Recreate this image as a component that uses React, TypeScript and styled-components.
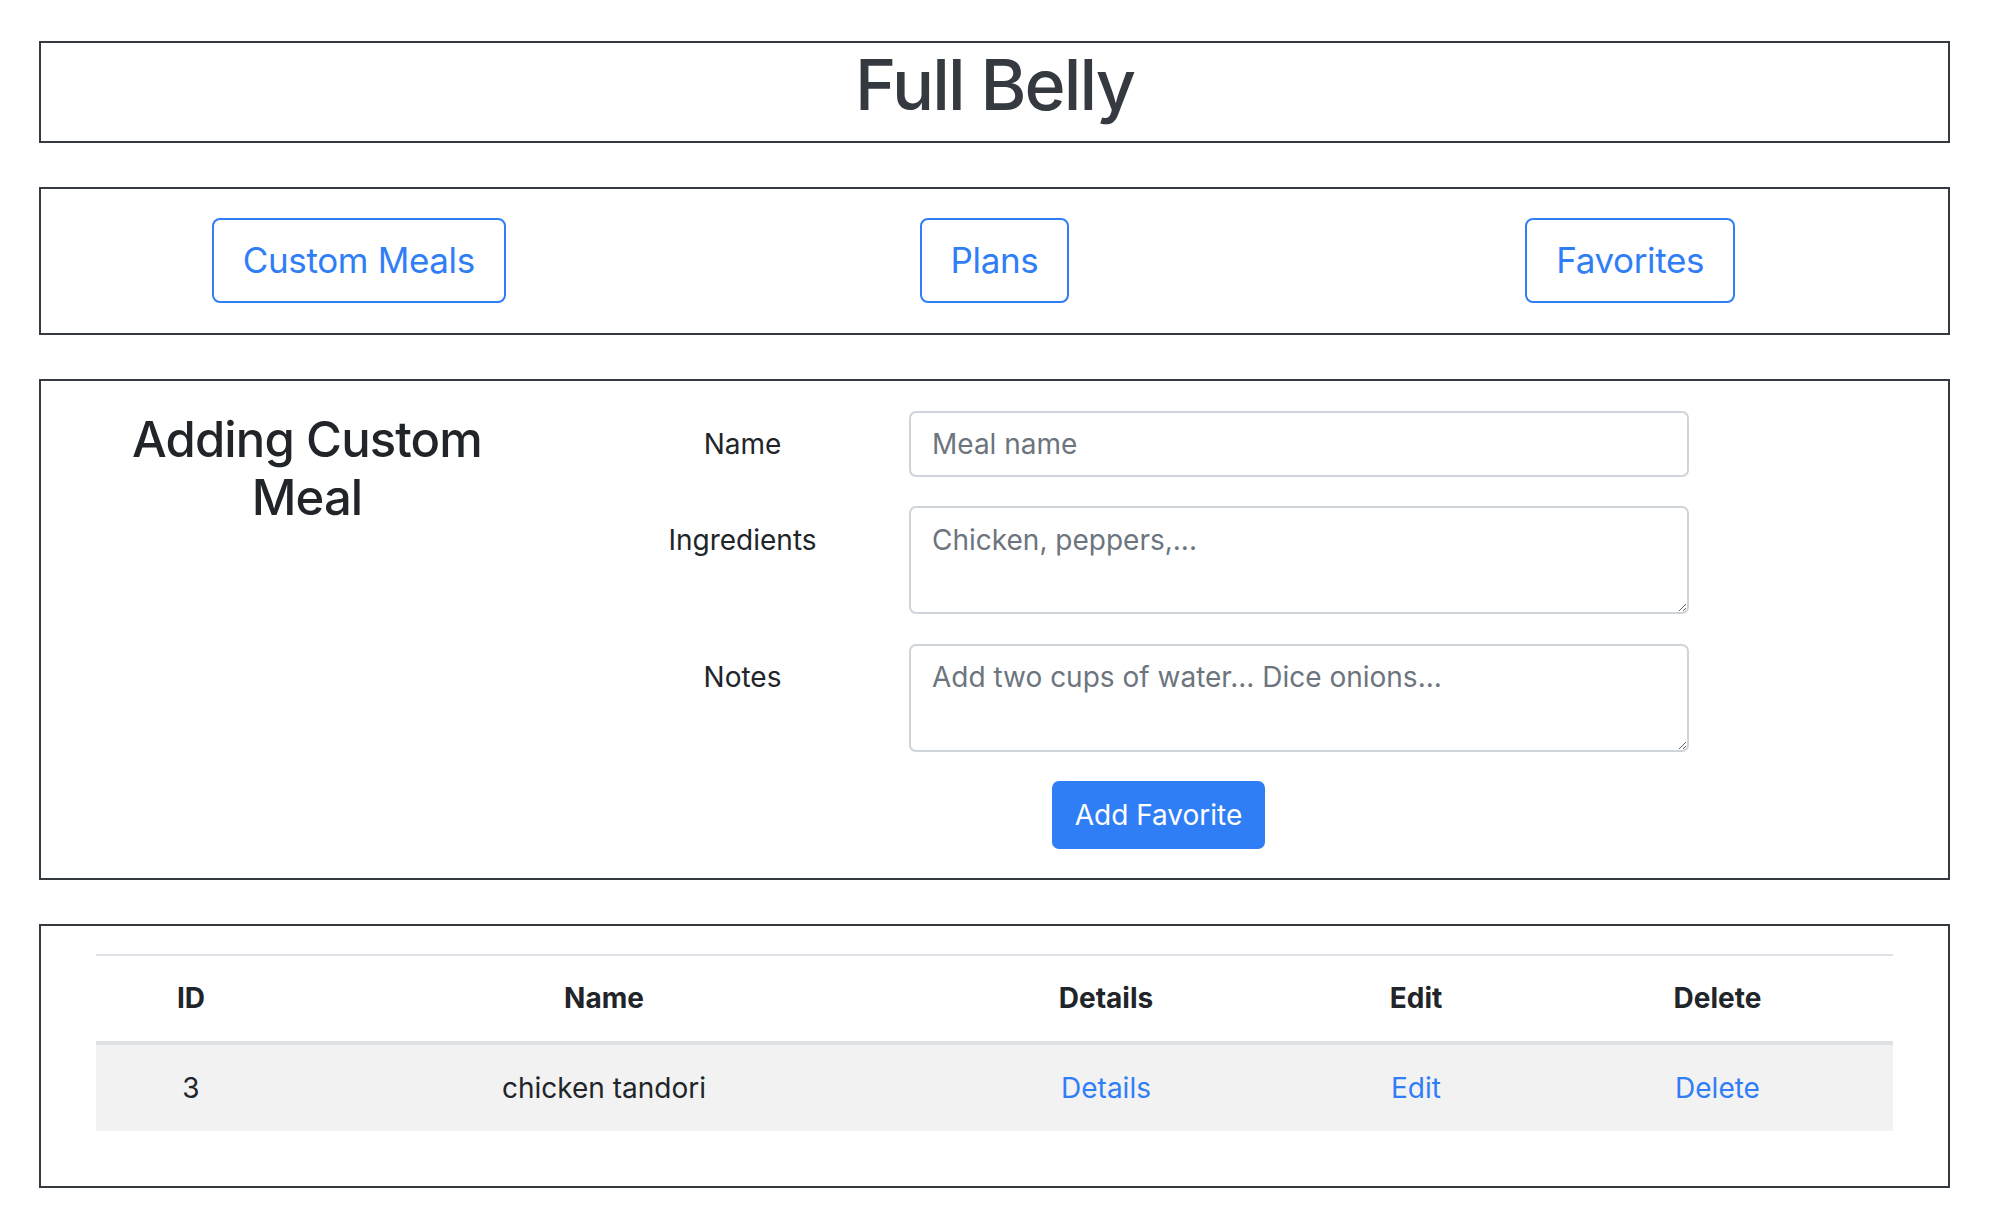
import React from "react";
import styled, { createGlobalStyle } from "styled-components";

const BLUE = "#307ef6";

const GlobalStyle = createGlobalStyle`
  *, *::before, *::after { box-sizing: border-box; }
  html, body { margin: 0; padding: 0; background: #ffffff; }
  body {
    font-family: Inter, "Liberation Sans", "Noto Sans", sans-serif;
    color: #212529;
    font-size: 28px;
    line-height: 1.5;
  }
`;

const Page = styled.div`
  display: flex;
  flex-direction: column;
  gap: 44px;
  width: 1911px;
  margin: 41px 0 29px 39px;
`;

const Box = styled.section`
  border: 2px solid #343a40;
  background: #fff;
`;

const TitleBox = styled(Box)`
  text-align: center;
`;

const Title = styled.h1`
  margin: 0 0 14px;
  font-size: 70px;
  font-weight: 500;
  line-height: 1.2;
  letter-spacing: -0.027em;
  color: #343a40;
`;

const NavBox = styled(Box)`
  display: grid;
  grid-template-columns: repeat(3, 1fr);
  justify-items: center;
  align-items: center;
  padding: 29px 0 30px;
`;

const OutlineButton = styled.button`
  font-family: inherit;
  font-size: 35px;
  line-height: 1.5;
  font-weight: 400;
  letter-spacing: -0.01em;
  padding: 14px 29px;
  border: 2px solid ${BLUE};
  border-radius: 8px;
  background: transparent;
  color: ${BLUE};
  cursor: pointer;
`;

const FormBox = styled(Box)`
  display: grid;
  grid-template-columns: 532px 1113px;
  column-gap: 29px;
  align-items: start;
  padding: 30px 0 29px;
`;

const HeadingCol = styled.div`
  text-align: center;
`;

const Heading = styled.h3`
  margin: 0 auto;
  max-width: 420px;
  font-size: 49px;
  font-weight: 500;
  line-height: 1.2;
  letter-spacing: -0.018em;
  color: #212529;
`;

const Form = styled.form`
  display: flex;
  flex-direction: column;
  gap: 29.5px;
`;

const FieldRow = styled.div`
  display: grid;
  grid-template-columns: 281px 780px;
  column-gap: 26px;
  align-items: start;
`;

const Label = styled.label`
  text-align: center;
  padding-top: 12.5px;
  line-height: 42px;
  font-size: 28px;
  color: #212529;
`;

const fieldBase = `
  display: block;
  width: 100%;
  font-family: inherit;
  font-size: 28px;
  line-height: 42px;
  color: #495057;
  background: #fff;
  border: 2px solid #ced4da;
  border-radius: 7px;
  padding: 10px 21px;
  outline: none;
  &::placeholder { color: #6c757d; opacity: 1; }
`;

const Input = styled.input`
  ${fieldBase}
  height: 66px;
`;

const TextArea = styled.textarea`
  ${fieldBase}
  height: 108px;
  padding-top: 10.5px;
  resize: vertical;
`;

const SubmitRow = styled.div`
  display: flex;
  justify-content: center;
`;

const SubmitButton = styled.button`
  font-family: inherit;
  font-size: 28px;
  line-height: 42px;
  padding: 11px 21px;
  border: 2px solid ${BLUE};
  border-radius: 7px;
  background: ${BLUE};
  color: #fff;
  cursor: pointer;
`;

const TableBox = styled(Box)`
  padding: 28px 55px 55px;
`;

const Table = styled.table`
  width: 100%;
  border-collapse: collapse;
  table-layout: fixed;
  text-align: center;
  font-size: 28px;
  line-height: 42px;
`;

const Th = styled.th`
  font-weight: 700;
  color: #212529;
  border-top: 2px solid #dee2e6;
  border-bottom: 4px solid #dee2e6;
  padding: 21px 0 22px;
`;

const StripedRow = styled.tr`
  background: #f2f2f2;
`;

const Td = styled.td`
  padding: 22px 0;
  color: #212529;
`;

const Link = styled.a`
  color: ${BLUE};
  text-decoration: none;
  cursor: pointer;
`;

export default function App() {
  return (
    <>
      <GlobalStyle />
      <Page>
        <TitleBox>
          <Title>Full Belly</Title>
        </TitleBox>

        <NavBox>
          <OutlineButton>Custom Meals</OutlineButton>
          <OutlineButton>Plans</OutlineButton>
          <OutlineButton>Favorites</OutlineButton>
        </NavBox>

        <FormBox>
          <HeadingCol>
            <Heading>Adding Custom Meal</Heading>
          </HeadingCol>
          <Form onSubmit={(e) => e.preventDefault()}>
            <FieldRow>
              <Label htmlFor="meal-name">Name</Label>
              <Input id="meal-name" placeholder="Meal name" />
            </FieldRow>
            <FieldRow>
              <Label htmlFor="meal-ingredients">Ingredients</Label>
              <TextArea id="meal-ingredients" placeholder="Chicken, peppers,..." />
            </FieldRow>
            <FieldRow>
              <Label htmlFor="meal-notes">Notes</Label>
              <TextArea id="meal-notes" placeholder="Add two cups of water... Dice onions..." />
            </FieldRow>
            <SubmitRow>
              <SubmitButton type="submit">Add Favorite</SubmitButton>
            </SubmitRow>
          </Form>
        </FormBox>

        <TableBox>
          <Table>
            <colgroup>
              <col style={{ width: 190 }} />
              <col style={{ width: 636 }} />
              <col style={{ width: 368 }} />
              <col style={{ width: 252 }} />
              <col />
            </colgroup>
            <thead>
              <tr>
                <Th>ID</Th>
                <Th>Name</Th>
                <Th>Details</Th>
                <Th>Edit</Th>
                <Th>Delete</Th>
              </tr>
            </thead>
            <tbody>
              <StripedRow>
                <Td>3</Td>
                <Td>chicken tandori</Td>
                <Td><Link>Details</Link></Td>
                <Td><Link>Edit</Link></Td>
                <Td><Link>Delete</Link></Td>
              </StripedRow>
            </tbody>
          </Table>
        </TableBox>
      </Page>
    </>
  );
}
